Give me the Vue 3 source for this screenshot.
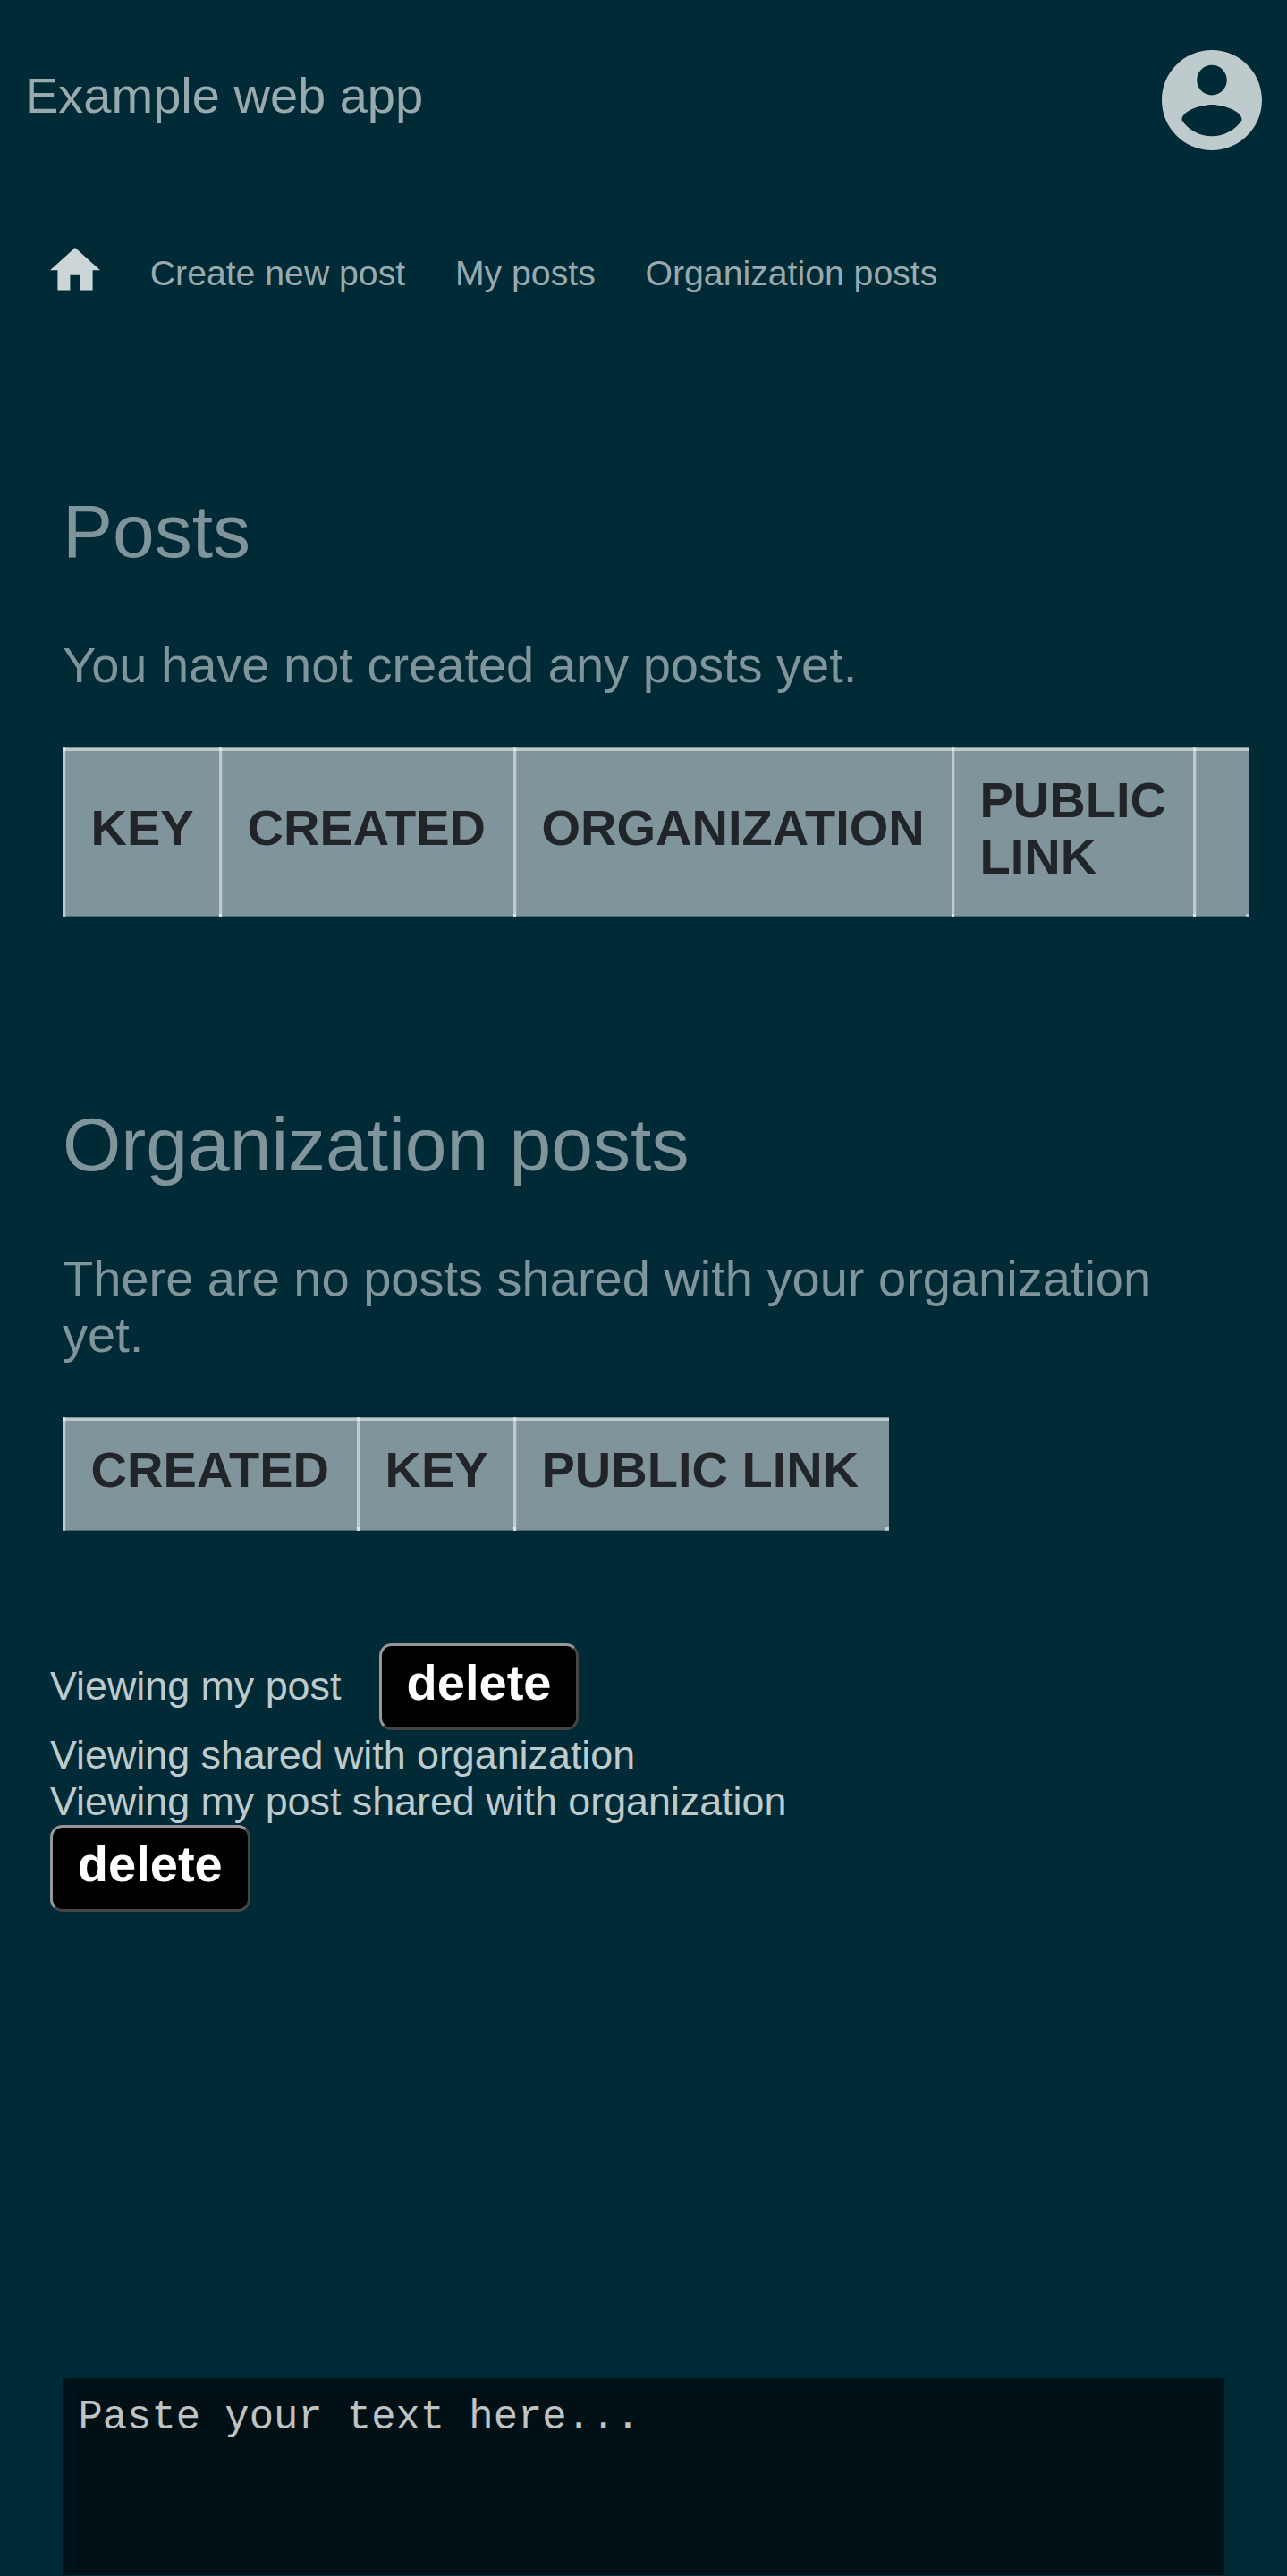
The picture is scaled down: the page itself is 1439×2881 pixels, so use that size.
<script setup>
const links = ['Create new post', 'My posts', 'Organization posts']
const postColumns = [
  { label: 'KEY', size: 'key' },
  { label: 'CREATED', size: 'created' },
  { label: 'ORGANIZATION', size: 'organization' },
  { label: 'PUBLIC LINK', size: 'public' },
  { label: '', size: 'actions' },
]
const sharedColumns = [
  { label: 'CREATED', size: 'created' },
  { label: 'KEY', size: 'key' },
  { label: 'PUBLIC LINK', size: 'public-wide' },
]
</script>

<template>
  <div class="page">
    <header class="topbar">
      <span class="brand">Example web app</span>
      <svg class="account" viewBox="2 2 20 20" aria-label="Account">
        <path d="M12 2C6.48 2 2 6.48 2 12s4.48 10 10 10 10-4.48 10-10S17.52 2 12 2zm0 3c1.66 0 3 1.34 3 3s-1.34 3-3 3-3-1.34-3-3 1.34-3 3-3zm0 14.2c-2.5 0-4.71-1.28-6-3.22.03-1.99 4-3.08 6-3.08 1.99 0 5.97 1.09 6 3.08-1.29 1.94-3.5 3.22-6 3.22z" />
      </svg>
    </header>

    <nav class="nav">
      <svg class="home" viewBox="2 3 20 17" aria-label="Home">
        <path d="M10 20v-6h4v6h5v-8h3L12 3 2 12h3v8z" />
      </svg>
      <a v-for="link in links" :key="link" class="link">{{ link }}</a>
    </nav>

    <section class="posts">
      <h2 class="heading">Posts</h2>
      <p class="note">You have not created any posts yet.</p>
      <table class="grid">
        <thead>
          <tr>
            <th v-for="col in postColumns" :key="col.size" :class="col.size">{{ col.label }}</th>
          </tr>
        </thead>
      </table>
    </section>

    <section class="posts shared">
      <h2 class="heading">Organization posts</h2>
      <p class="note">There are no posts shared with your organization yet.</p>
      <table class="grid">
        <thead>
          <tr>
            <th v-for="col in sharedColumns" :key="col.size" :class="col.size">{{ col.label }}</th>
          </tr>
        </thead>
      </table>
    </section>

    <div class="viewing">
      <div class="own">
        <span>Viewing my post</span>
        <button class="delete">delete</button>
      </div>
      <div>Viewing shared with organization</div>
      <div>Viewing my post shared with organization</div>
      <button class="delete last">delete</button>
    </div>

    <div class="editor">
      <div class="paper">Paste your text here...</div>
    </div>
  </div>
</template>

<style>
body {
  background: #002b36;
}
</style>

<style scoped>
.page {
  box-sizing: border-box;
  width: 1439px;
  height: 2881px;
  overflow: hidden;
  padding-top: 56px;
  background: #002b36;
  font-family: "Liberation Sans", Arial, sans-serif;
  display: flex;
  flex-direction: column;
}
.topbar {
  display: flex;
  justify-content: space-between;
  align-items: flex-start;
  height: 221px;
  padding: 0 28.5px 0 28px;
}
.brand {
  margin-top: 19px;
  font-size: 56px;
  line-height: 63px;
  color: #99aaaf;
}
.account {
  width: 112px;
  height: 112px;
  fill: #bfcacd;
}
.nav {
  display: flex;
  align-items: flex-start;
  gap: 55.8px;
  height: 270px;
  padding-left: 56px;
}
.home {
  width: 56px;
  height: 47.6px;
  margin-top: 0.4px;
  fill: #ccd5d7;
}
.link {
  margin-top: 6px;
  font-size: 39.2px;
  line-height: 45px;
  color: #99aaaf;
}
.posts {
  padding-left: 70px;
  color: #80959b;
}
.shared {
  margin-top: 207px;
}
.heading {
  margin: 0 0 71px;
  font-size: 84px;
  font-weight: 400;
  line-height: 94px;
}
.note {
  margin: 0 0 61px;
  width: 1300px;
  font-size: 56px;
  line-height: 63px;
}
.grid {
  table-layout: fixed;
  border-collapse: separate;
  border-spacing: 0;
  width: 0;
  background: #80959b;
}
.grid th {
  box-sizing: border-box;
  padding: 27px 0 37px 31.5px;
  font-size: 56px;
  font-weight: 700;
  line-height: 63px;
  text-align: left;
  vertical-align: middle;
  color: #212529;
  background-image:
    linear-gradient(90deg, rgba(255, 255, 255, 0.5) 3px, rgba(255, 255, 255, 0.15) 3px),
    linear-gradient(rgba(255, 255, 255, 0.5), rgba(255, 255, 255, 0.5)),
    linear-gradient(rgba(255, 255, 255, 0.5), rgba(255, 255, 255, 0.5)),
    linear-gradient(#4b6a73, #4b6a73);
  background-repeat: no-repeat;
  background-size: 4px 100%, 100% 3px, 3px 4px, 100% 1px;
  background-position: 0 0, 0 1px, 0 100%, 0 100%;
}
.grid th:first-child {
  background-size: 4px 100%, 100% 3px, 0 0, 100% 1px;
}
.grid th:last-child {
  background-image:
    linear-gradient(90deg, rgba(255, 255, 255, 0.5) 3px, rgba(255, 255, 255, 0.15) 3px),
    linear-gradient(rgba(255, 255, 255, 0.5), rgba(255, 255, 255, 0.5)),
    linear-gradient(rgba(255, 255, 255, 0.5), rgba(255, 255, 255, 0.5)),
    linear-gradient(rgba(255, 255, 255, 0.5), rgba(255, 255, 255, 0.5)),
    linear-gradient(#4b6a73, #4b6a73);
  background-size: 4px 100%, 100% 3px, 3px 4px, 4px 4px, 100% 1px;
  background-position: 0 0, 0 1px, 0 100%, 100% 100%, 0 100%;
}
.key {
  width: 175px;
}
.created {
  width: 329px;
}
.organization {
  width: 490px;
}
.public {
  width: 270px;
}
.public-wide {
  width: 420px;
}
.grid .key,
.grid .created,
.grid .organization {
  padding-top: 26px;
  padding-bottom: 37px;
}
.shared .grid th {
  padding-top: 27px;
}
.actions {
  width: 63px;
}
.viewing {
  margin-top: 126px;
  padding-left: 56px;
  font-size: 44.8px;
  line-height: 52px;
  color: #bfcacd;
}
.own {
  display: flex;
  align-items: baseline;
  gap: 42.4px;
  height: 98px;
}
.delete {
  box-sizing: border-box;
  display: block;
  width: 223.6px;
  height: 97px;
  padding: 9px 0 19px;
  border: 3px solid;
  border-color: #979797 #454545 #454545 #979797;
  border-radius: 14px;
  background: #000;
  color: #fff;
  font-family: inherit;
  font-size: 56px;
  font-weight: 700;
  line-height: 63px;
  text-align: center;
}
.last {
  margin-top: 1px;
}
.editor {
  box-sizing: border-box;
  width: 1299px;
  height: 220px;
  margin: 522px 0 0 70px;
  padding: 14px 7px 0 14px;
  background: #001319;
}
.paper {
  box-sizing: border-box;
  height: 206px;
  padding: 5px 0 0 3.5px;
  background: #001014;
  color: #bfc3c4;
  font-family: "Liberation Mono", "Courier New", monospace;
  font-size: 45.5px;
  line-height: 51px;
}
</style>
